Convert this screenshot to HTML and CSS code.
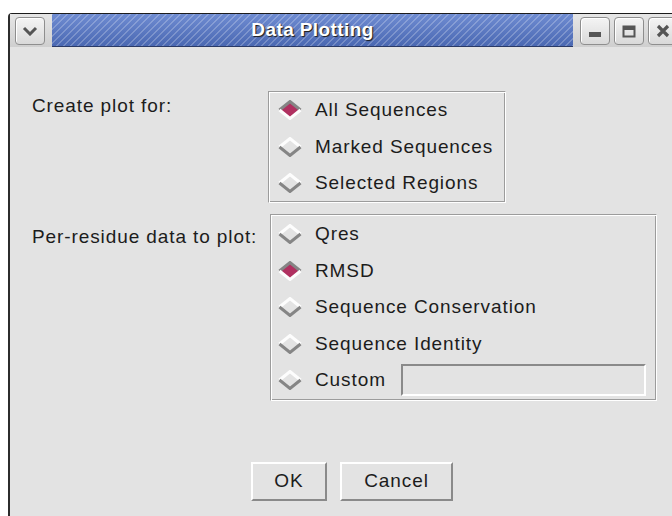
FILE: index.html
```html
<!DOCTYPE html>
<html>
<head>
<meta charset="utf-8">
<title>Data Plotting</title>
<link rel="stylesheet" href="styles.css">
</head>
<body>
<div class="win">
  <div class="titlebar">
    <div class="tb-left">
      <span class="tbtn">
        <svg width="16" height="10" viewBox="0 0 16 10"><path d="M2 2 L8 8 L14 2" fill="none" stroke="#555" stroke-width="3"/></svg>
      </span>
    </div>
    <div class="tb-caption"><span>Data Plotting</span></div>
    <div class="tb-right">
      <span class="tbtn">
        <svg width="16" height="16" viewBox="0 0 16 16"><rect x="2" y="9" width="12" height="5" fill="#555"/></svg>
      </span>
      <span class="tbtn">
        <svg width="16" height="16" viewBox="0 0 16 16"><rect x="2.5" y="3.5" width="11" height="10" fill="none" stroke="#555" stroke-width="2"/><rect x="2" y="3" width="12" height="4" fill="#555"/></svg>
      </span>
      <span class="tbtn">
        <svg width="16" height="16" viewBox="0 0 16 16"><path d="M3 3 L13 13 M13 3 L3 13" stroke="#555" stroke-width="3.2"/></svg>
      </span>
    </div>
  </div>

  <div class="content">
    <div class="form">
      <div class="lbl lbl-first">Create plot for:</div>
      <div class="group g1">
        <div class="radio on">
          <svg class="dia" viewBox="0 0 24 20"><polygon points="12,1.5 22.5,10 12,18.5 1.5,10" class="fill"/><path d="M1.5 10 L12 1.5 L22.5 10" class="tl"/><path d="M1.5 10 L12 18.5 L22.5 10" class="br"/></svg>
          <span>All Sequences</span>
        </div>
        <div class="radio">
          <svg class="dia" viewBox="0 0 24 20"><polygon points="12,1.5 22.5,10 12,18.5 1.5,10" class="fill"/><path d="M1.5 10 L12 1.5 L22.5 10" class="tl"/><path d="M1.5 10 L12 18.5 L22.5 10" class="br"/></svg>
          <span>Marked Sequences</span>
        </div>
        <div class="radio">
          <svg class="dia" viewBox="0 0 24 20"><polygon points="12,1.5 22.5,10 12,18.5 1.5,10" class="fill"/><path d="M1.5 10 L12 1.5 L22.5 10" class="tl"/><path d="M1.5 10 L12 18.5 L22.5 10" class="br"/></svg>
          <span>Selected Regions</span>
        </div>
      </div>

      <div class="lbl lbl-second">Per-residue data to plot:</div>
      <div class="group g2">
        <div class="radio">
          <svg class="dia" viewBox="0 0 24 20"><polygon points="12,1.5 22.5,10 12,18.5 1.5,10" class="fill"/><path d="M1.5 10 L12 1.5 L22.5 10" class="tl"/><path d="M1.5 10 L12 18.5 L22.5 10" class="br"/></svg>
          <span>Qres</span>
        </div>
        <div class="radio on">
          <svg class="dia" viewBox="0 0 24 20"><polygon points="12,1.5 22.5,10 12,18.5 1.5,10" class="fill"/><path d="M1.5 10 L12 1.5 L22.5 10" class="tl"/><path d="M1.5 10 L12 18.5 L22.5 10" class="br"/></svg>
          <span>RMSD</span>
        </div>
        <div class="radio">
          <svg class="dia" viewBox="0 0 24 20"><polygon points="12,1.5 22.5,10 12,18.5 1.5,10" class="fill"/><path d="M1.5 10 L12 1.5 L22.5 10" class="tl"/><path d="M1.5 10 L12 18.5 L22.5 10" class="br"/></svg>
          <span>Sequence Conservation</span>
        </div>
        <div class="radio">
          <svg class="dia" viewBox="0 0 24 20"><polygon points="12,1.5 22.5,10 12,18.5 1.5,10" class="fill"/><path d="M1.5 10 L12 1.5 L22.5 10" class="tl"/><path d="M1.5 10 L12 18.5 L22.5 10" class="br"/></svg>
          <span>Sequence Identity</span>
        </div>
        <div class="radio custom">
          <svg class="dia" viewBox="0 0 24 20"><polygon points="12,1.5 22.5,10 12,18.5 1.5,10" class="fill"/><path d="M1.5 10 L12 1.5 L22.5 10" class="tl"/><path d="M1.5 10 L12 18.5 L22.5 10" class="br"/></svg>
          <span>Custom</span>
          <span class="entry"></span>
        </div>
      </div>
    </div>

    <div class="buttons">
      <button class="btn btn-ok">OK</button>
      <button class="btn btn-cancel">Cancel</button>
    </div>
  </div>
</div>
</body>
</html>
```

FILE: styles.css
```css
html, body {
  margin: 0;
  padding: 0;
  background: #ffffff;
  overflow: hidden;
}

body {
  font-family: "Liberation Sans", Arial, sans-serif;
  color: #1c1c1c;
}

/* window frame */
.win {
  margin: 13px 0 0 8px;
  width: 684px;
  height: 520px;
  background: #e3e3e3;
  border-left: 2px solid #2c2c2c;
  border-top: 1px solid #1c1c1c;
  border-top-left-radius: 4px;
}

/* title bar */
.titlebar {
  display: flex;
  height: 33px;
  background: linear-gradient(#e6e6e6, #cfcfcf);
}

.tb-left {
  width: 42px;
  display: flex;
  align-items: center;
  padding-left: 5px;
  box-sizing: border-box;
}

.tb-right {
  flex: 1;
  display: flex;
  align-items: center;
  padding-left: 7px;
  gap: 4px;
}

.tbtn {
  width: 28px;
  height: 26px;
  border: 1px solid #8e8e8e;
  border-radius: 4px;
  background: linear-gradient(#f4f4f4, #d9d9d9);
  box-shadow: inset 1px 1px 0 #ffffff;
  display: flex;
  align-items: center;
  justify-content: center;
  flex: none;
}

.tb-caption {
  width: 521px;
  flex: none;
  display: flex;
  align-items: center;
  justify-content: center;
  border-bottom: 1px solid #2a3a66;
  box-sizing: border-box;
  background:
    repeating-linear-gradient(135deg, rgba(255, 255, 255, 0.22) 0 1.4px, rgba(255, 255, 255, 0) 1.4px 5px),
    linear-gradient(#6f8cd2, #4a68b2);
}

.tb-caption span {
  color: #ffffff;
  font-weight: bold;
  font-size: 19px;
  letter-spacing: 0.4px;
  text-shadow: 1px 1px 1px #1a1a1a;
}

/* dialog body */
.content {
  padding: 44px 0 0 22px;
  font-size: 19px;
  letter-spacing: 0.9px;
}

.form {
  display: grid;
  grid-template-columns: 236px auto;
  row-gap: 11px;
  align-items: start;
}

.lbl {
  line-height: 24px;
}

.lbl-first { padding-top: 3px; }
.lbl-second { padding-top: 11px; }

/* etched frame around each radio group */
.group {
  border: 1px solid;
  border-color: #9c9c9c #ffffff #ffffff #9c9c9c;
  box-shadow: inset 1px 1px 0 #ffffff, inset -1px -1px 0 #9c9c9c;
  padding: 1px 0;
  box-sizing: border-box;
}

.g1 {
  width: 238px;
  padding: 0 0 0 9px;
}

.g2 {
  width: 387px;
  margin-left: 2px;
  padding-left: 7px;
}

.radio {
  height: 36.6px;
  display: flex;
  align-items: center;
  white-space: nowrap;
}

.dia {
  width: 24px;
  height: 20px;
  margin-right: 13px;
  flex: none;
}

.dia .fill { fill: #e3e3e3; }
.dia .tl { fill: none; stroke: #fdfdfd; stroke-width: 3; }
.dia .br { fill: none; stroke: #858585; stroke-width: 3; }

.radio.on .dia .fill { fill: #b03060; }
.radio.on .dia .tl { stroke: #858585; }
.radio.on .dia .br { stroke: #fdfdfd; }

.entry {
  width: 245px;
  height: 32px;
  margin: 0 0 0 auto;
  margin-right: 10px;
  box-sizing: border-box;
  border: 2px solid;
  border-color: #8a8a8a #ffffff #ffffff #8a8a8a;
  background: #e3e3e3;
  flex: none;
}

/* OK / Cancel */
.buttons {
  display: flex;
  justify-content: center;
  gap: 13px;
  margin: 61px 0 0 -22px;
}

.btn {
  height: 39px;
  font-family: inherit;
  font-size: 19px;
  letter-spacing: 0.9px;
  color: #1c1c1c;
  background: #e3e3e3;
  border: 2px solid;
  border-color: #ffffff #8a8a8a #8a8a8a #ffffff;
  padding: 0;
}

.btn-ok { width: 76px; }
.btn-cancel { width: 113px; }
```
